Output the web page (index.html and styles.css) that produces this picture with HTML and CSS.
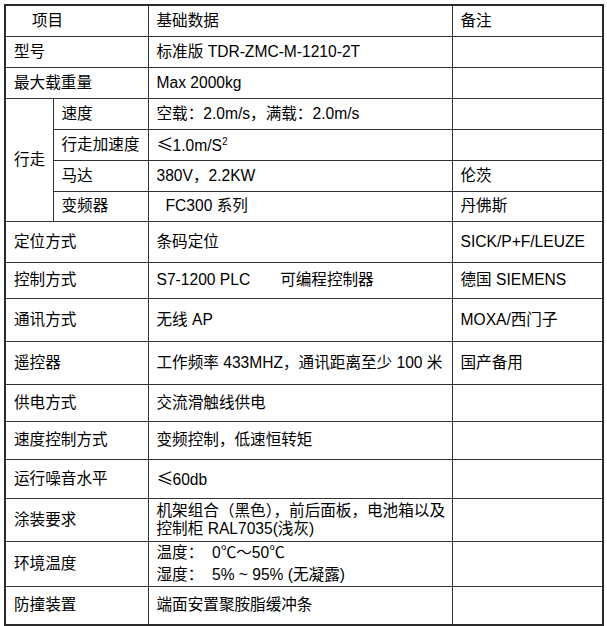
FILE: index.html
```html
<!DOCTYPE html>
<html lang="zh-CN">
<head>
<meta charset="utf-8">
<title>规格参数</title>
<link rel="stylesheet" href="styles.css">
</head>
<body>
<table class="spec">
  <colgroup>
    <col class="c-a">
    <col class="c-b">
    <col class="c-c">
    <col class="c-d">
  </colgroup>
  <tbody>
    <tr class="h31">
      <td colspan="2" class="head-item">项目</td>
      <td>基础数据</td>
      <td>备注</td>
    </tr>
    <tr class="h31">
      <td colspan="2">型号</td>
      <td>标准版 TDR-ZMC-M-1210-2T</td>
      <td></td>
    </tr>
    <tr class="h31">
      <td colspan="2">最大载重量</td>
      <td>Max 2000kg</td>
      <td></td>
    </tr>
    <tr class="h31">
      <td rowspan="4">行走</td>
      <td>速度</td>
      <td>空载：2.0m/s，满载：2.0m/s</td>
      <td></td>
    </tr>
    <tr class="h31">
      <td>行走加速度</td>
      <td><span class="le">≤</span>1.0m/S<sup>2</sup></td>
      <td></td>
    </tr>
    <tr class="h31">
      <td>马达</td>
      <td>380V，2.2KW</td>
      <td>伦茨</td>
    </tr>
    <tr class="h30">
      <td>变频器</td>
      <td class="indent">FC300 系列</td>
      <td>丹佛斯</td>
    </tr>
    <tr class="h41">
      <td colspan="2">定位方式</td>
      <td>条码定位</td>
      <td>SICK/P+F/LEUZE</td>
    </tr>
    <tr class="h36">
      <td colspan="2">控制方式</td>
      <td>S7-1200 PLC<span class="gap"></span>可编程控制器</td>
      <td>德国 SIEMENS</td>
    </tr>
    <tr class="h43">
      <td colspan="2">通讯方式</td>
      <td>无线 AP</td>
      <td>MOXA/西门子</td>
    </tr>
    <tr class="h43">
      <td colspan="2">遥控器</td>
      <td>工作频率 433MHZ，通讯距离至少 100 米</td>
      <td>国产备用</td>
    </tr>
    <tr class="h37">
      <td colspan="2">供电方式</td>
      <td>交流滑触线供电</td>
      <td></td>
    </tr>
    <tr class="h38">
      <td colspan="2">速度控制方式</td>
      <td>变频控制，低速恒转矩</td>
      <td></td>
    </tr>
    <tr class="h39">
      <td colspan="2">运行噪音水平</td>
      <td><span class="le">≤</span>60db</td>
      <td></td>
    </tr>
    <tr class="h43">
      <td colspan="2">涂装要求</td>
      <td class="multi">机架组合（黑色），前后面板，电池箱以及<br>控制柜 RAL7035(浅灰)</td>
      <td></td>
    </tr>
    <tr class="h42">
      <td colspan="2">环境温度</td>
      <td class="multi wide">温度：&nbsp;&nbsp;0℃～50℃<br>湿度：&nbsp;&nbsp;5% ~ 95% (无凝露)</td>
      <td></td>
    </tr>
    <tr class="h39">
      <td colspan="2">防撞装置</td>
      <td>端面安置聚胺脂缓冲条</td>
      <td></td>
    </tr>
  </tbody>
</table>
</body>
</html>
```
FILE: styles.css
```css
html, body {
  margin: 0;
  padding: 0;
  background: #ffffff;
}

body {
  padding: 4px 0 0 4px;
  font-family: "Liberation Sans", Arial, "Noto Sans CJK SC", sans-serif;
  font-size: 15.6px;
  color: #000000;
}

.spec {
  border-collapse: collapse;
  table-layout: fixed;
  width: 600px;
  border: 2px solid #2a2a2a;
}

.c-a { width: 48px; }
.c-b { width: 95px; }
.c-c { width: 304px; }
.c-d { width: 151px; }

.spec td {
  border: 1px solid #333333;
  padding: 0 8px;
  vertical-align: middle;
  line-height: 18px;
  white-space: nowrap;
  box-sizing: border-box;
}

.spec td.head-item {
  padding-left: 26px;
}

.spec td.indent {
  padding-left: 17px;
}

.gap {
  display: inline-block;
  width: 30px;
}

.le {
  display: inline-block;
  width: 16px;
  font-family: "Noto Sans CJK SC", sans-serif;
  font-size: 17px;
  text-align: left;
}

.spec sup {
  font-size: 10px;
  line-height: 0;
  vertical-align: 6px;
}

.spec td.multi { line-height: 18px; }
.spec td.multi.wide { line-height: 22px; }

.h30 { height: 30px; }
.h31 { height: 31px; }
.h36 { height: 36px; }
.h37 { height: 37px; }
.h38 { height: 38px; }
.h39 { height: 39px; }
.h41 { height: 41px; }
.h42 { height: 42px; }
.h43 { height: 43px; }
```
